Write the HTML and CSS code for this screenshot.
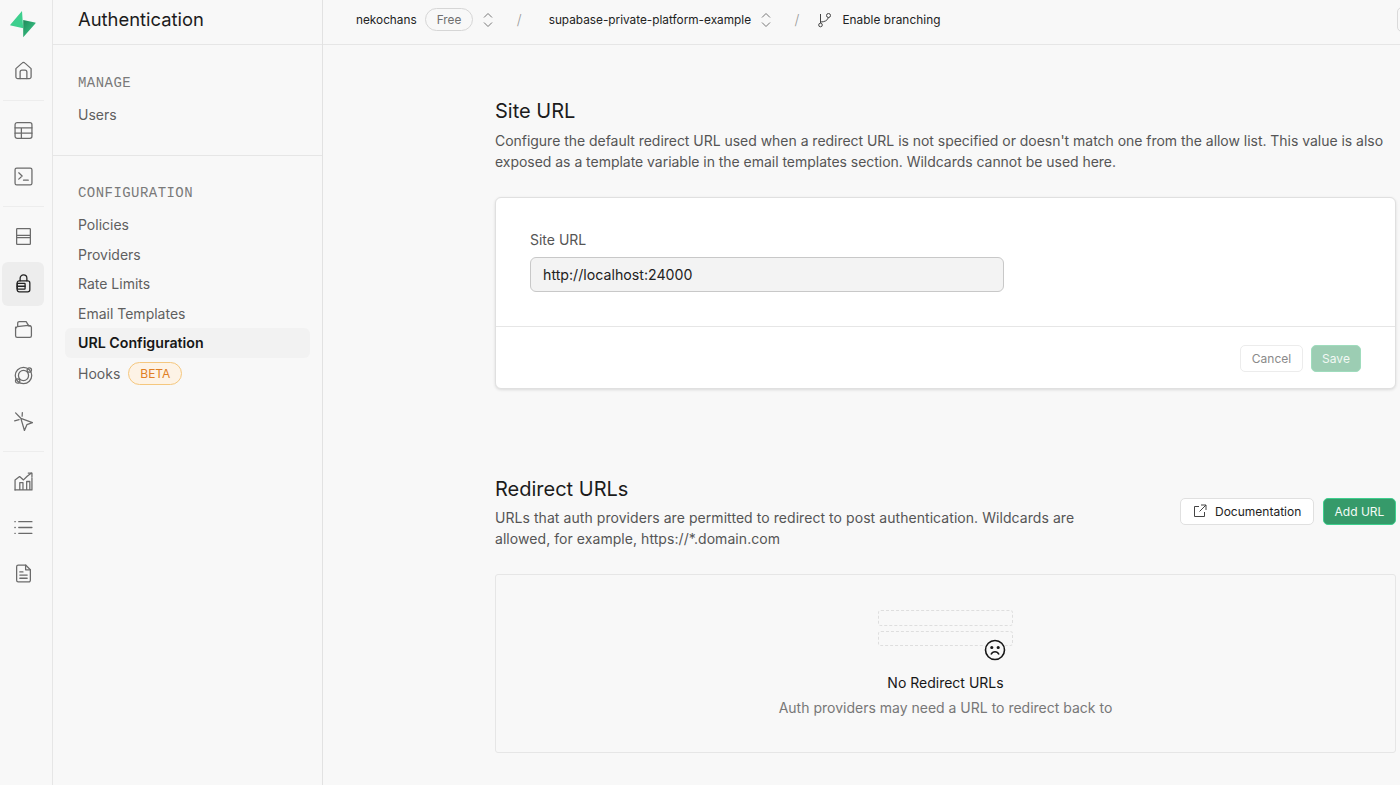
FILE: index.html
```html
<!DOCTYPE html>
<html lang="en">
<head>
<meta charset="utf-8">
<title>Authentication</title>
<link rel="stylesheet" href="styles.css">
</head>
<body>
<div class="app">
  <nav class="rail">
    <svg class="logo" width="28" height="28" viewBox="0 0 28 28">
      <defs><linearGradient id="lg" x1="0" y1="0" x2="1" y2="1"><stop offset="0" stop-color="#1f8a5a"/><stop offset="1" stop-color="#3ecf8e"/></linearGradient></defs>
      <path d="M13 1 1.500 14.500c-.4.5-.2 1 .4 1.100l12.300 2.700z" fill="#3ecf8e"/>
      <path d="M14.200 10v17.300L26.400 13.400c.4-.5.200-.8-.4-.9z" fill="url(#lg)"/>
    </svg>
    <div class="rail-btn"><svg class="ic" viewBox="0 0 18 18"><path d="M1.800 7.200 7.600 2a2 2 0 0 1 2.800 0l5.800 5.200V15a1.800 1.800 0 0 1-1.800 1.800H3.600A1.800 1.800 0 0 1 1.800 15z"/><path d="M5.800 16.600V10.500A1.800 1.800 0 0 1 7.600 8.700h2.800a1.800 1.800 0 0 1 1.800 1.800v6.100"/></svg></div>
    <hr class="rail-sep">
    <div class="rail-btn"><svg class="ic" viewBox="0 0 18 18"><rect x="1" y="1.500" width="16" height="15" rx="2"/><path d="M1 6.500h16M1 11.500h16M7 6.500v10"/></svg></div>
    <div class="rail-btn"><svg class="ic" viewBox="0 0 18 18"><rect x="1" y="1" width="16" height="16" rx="1.600"/><path d="m4.500 5.500 3.200 3-3.200 3M9 12.500h4.500"/></svg></div>
    <hr class="rail-sep">
    <div class="rail-btn rail-db"><svg class="ic" viewBox="0 0 18 18"><rect x="2.500" y="1.500" width="13" height="6.500" rx=".6"/><rect x="2.500" y="10" width="13" height="6.500" rx=".6"/><path d="M2.500 8v2M15.500 8v2"/></svg></div>
    <div class="rail-btn rail-active"><svg class="ic ic-dark" viewBox="0 0 18 18"><path d="M5.800 6.500V4a3.200 3.200 0 0 1 6.400 0v2.500"/><rect x="3" y="6.500" width="12" height="10.500" rx="2"/><rect x="3" y="8.800" width="7.500" height="5.600" rx=".4"/><path d="M3 11.600h7.500"/></svg></div>
    <div class="rail-btn"><svg class="ic" viewBox="0 0 18 18"><path d="M1.500 6.800V15A1.500 1.500 0 0 0 3 16.500h12a1.500 1.500 0 0 0 1.500-1.500V7a1.500 1.500 0 0 0-1.500-1.500h-1L11.500 1.500H5A1.500 1.500 0 0 0 3.500 3v3"/><path d="M1.500 8 3 6.300 13.500 5l2 .6"/></svg></div>
    <div class="rail-btn"><svg class="ic" viewBox="0 0 18 18"><circle cx="9" cy="9" r="7.800"/><circle cx="9" cy="9" r="4.800"/><circle cx="14.500" cy="3.800" r="2.100"/><circle cx="3.500" cy="14.200" r="2.100"/></svg></div>
    <div class="rail-btn"><svg class="ic" viewBox="0 0 18 18"><path d="m6.500 6 11 4-5.300 2-2.300 5.500z"/><path d="M6 5.500 1.500.8M4.800 7.300.6 8.300M7.700 4 7.900.6"/></svg></div>
    <hr class="rail-sep">
    <div class="rail-btn"><svg class="ic" viewBox="0 0 18 18"><path d="M1 17V7.500l4.300-3.200 3.700 3.200 3.500-3.500 4-3"/><path d="M13.500 1H17v3.500"/><path d="M1 17h16V5.500M5.500 17v-7H8.500v7M12 17v-8h3v8"/></svg></div>
    <div class="rail-btn"><svg class="ic" viewBox="0 0 18 18"><path d="M4.500 3.500H17M4.500 9H17M4.500 14.500H17"/><path d="M.8 3.500h.4M.8 9h.4M.8 14.500h.4"/></svg></div>
    <div class="rail-btn"><svg class="ic" viewBox="0 0 18 18"><path d="M2.500 2.500A1.500 1.500 0 0 1 4 1h7l4.500 4.500V15.500A1.500 1.500 0 0 1 14 17H4a1.500 1.500 0 0 1-1.500-1.500z"/><path d="M11 1v4.500h4.500M5.500 7.500h3M5.500 10.500h7M5.500 13.500h7"/></svg></div>
  </nav>

  <aside class="menu">
    <h1 class="menu-title">Authentication</h1>
    <section class="menu-group group-manage">
      <h2 class="menu-heading">MANAGE</h2>
      <a class="menu-item">Users</a>
    </section>
    <section class="menu-group group-config">
      <h2 class="menu-heading">CONFIGURATION</h2>
      <a class="menu-item">Policies</a>
      <a class="menu-item">Providers</a>
      <a class="menu-item">Rate Limits</a>
      <a class="menu-item">Email Templates</a>
      <a class="menu-item menu-current">URL Configuration</a>
      <a class="menu-item menu-hooks">Hooks <span class="beta">BETA</span></a>
    </section>
  </aside>

  <div class="main">
    <header class="topbar">
      <span class="crumb">nekochans</span>
      <span class="plan">Free</span>
      <svg class="updown" viewBox="0 0 12 18"><path d="m2 6.500 4-4 4 4M2 11.500l4 4 4-4"/></svg>
      <span class="slash">/</span>
      <span class="crumb">supabase-private-platform-example</span>
      <svg class="updown" viewBox="0 0 12 18"><path d="m2 6.500 4-4 4 4M2 11.500l4 4 4-4"/></svg>
      <span class="slash slash-b">/</span>
      <svg class="branch" viewBox="0 0 16 16"><circle cx="3.500" cy="13" r="1.800"/><circle cx="11.500" cy="3.500" r="2"/><path d="M3.500 11V2M3.500 10c4 0 7-1.500 8-4.500"/></svg>
      <span class="crumb crumb-wide">Enable branching</span>
      <span class="topbar-end"></span>
    </header>

    <main class="content">
      <section class="site">
        <h2 class="sec-title">Site URL</h2>
        <p class="sec-text">Configure the default redirect URL used when a redirect URL is not specified or doesn't match one from the allow list. This value is also exposed as a template variable in the email templates section. Wildcards cannot be used here.</p>
        <div class="card">
          <div class="card-body">
            <label class="field-label">Site URL</label>
            <div class="input">http://localhost:24000</div>
          </div>
          <div class="card-foot">
            <button class="btn btn-cancel">Cancel</button>
            <button class="btn btn-save">Save</button>
          </div>
        </div>
      </section>

      <section class="redirect">
        <div class="redirect-head">
          <div class="redirect-copy">
            <h2 class="sec-title">Redirect URLs</h2>
            <p class="sec-text sec-text-wide">URLs that auth providers are permitted to redirect to post authentication. Wildcards are allowed, for example, https://*.domain.com</p>
          </div>
          <div class="redirect-actions">
            <button class="btn btn-doc"><svg class="ext" viewBox="0 0 14 14"><path d="M6 2.500H1.500v10h10V8M8 1h5v5M13 1 6.500 7.500"/></svg>Documentation</button>
            <button class="btn btn-add">Add URL</button>
          </div>
        </div>
        <div class="empty">
          <div class="ghosts">
            <div class="ghost"></div>
            <div class="ghost"></div>
            <svg class="sad" viewBox="0 0 22 22"><circle cx="11" cy="11" r="9.500"/><path d="M7 15.500c1-2 2.400-2.800 4-2.800s3 .8 4 2.800"/><circle cx="7.800" cy="8.500" r=".8"/><circle cx="14.200" cy="8.500" r=".8"/></svg>
          </div>
          <p class="empty-title">No Redirect URLs</p>
          <p class="empty-text">Auth providers may need a URL to redirect back to</p>
        </div>
      </section>
    </main>
  </div>
</div>
</body>
</html>
```
FILE: styles.css
```css
* { box-sizing: border-box; }
html, body { margin: 0; height: 100%; overflow: hidden; }
body { font-family: "Inter", "Liberation Sans", sans-serif; background: #f8f8f8; color: #171717; }
.app { display: flex; height: 785px; width: 1400px; overflow: hidden; }

.rail { width: 53px; flex: none; border-right: 1px solid #e6e6e6; display: flex; flex-direction: column; align-items: center; padding-top: 10px; }
.logo { display: block; flex: none; margin-left: -6px; margin-bottom: 11px; }
.rail-btn { width: 42px; height: 44px; flex: none; display: flex; align-items: center; justify-content: center; margin-left: -6px; margin-bottom: 2px; }
.rail-db { margin-bottom: 3px; }
.rail-active { background: #ededed; border-radius: 6px; }
.rail-sep { width: 41px; flex: none; margin: 5px 0 8px -6px; border: 0; border-top: 1px solid #ededed; }
.ic { width: 19px; height: 19px; margin-top: -1px; fill: none; stroke: #6b6b6b; stroke-width: 1.2; stroke-linecap: round; stroke-linejoin: round; }
.ic-dark { stroke: #222; }

.menu { width: 270px; flex: none; border-right: 1px solid #e2e2e2; }
.menu-title { height: 45px; margin: 0; padding: 0 0 0 25px; font-size: 18.4px; font-weight: 400; line-height: 39px; border-bottom: 1px solid #e6e6e6; color: #1c1c1c; }
.menu-group { padding: 0 12px; }
.group-manage { padding-top: 28px; height: 111px; border-bottom: 1px solid #e6e6e6; }
.group-config { padding-top: 27px; }
.menu-heading { margin: 0 0 7px 13px; font: 400 14px/20px "Liberation Mono", monospace; letter-spacing: .45px; color: #7a7a7a; }
.menu-item { display: flex; align-items: center; height: 29.5px; padding-left: 13px; font-size: 14px; color: #5f5f5f; border-radius: 6px; }
.menu-current { color: #171717; font-weight: 600; font-size: 14.2px; background: #f2f2f2; }
.menu-hooks { margin-top: 1px; }
.beta { margin-left: 8px; height: 23px; padding: 0 11px; display: inline-flex; align-items: center; border: 1px solid #f5c77e; border-radius: 12px; background: #fdf3e6; color: #e07f24; font-size: 12px; }

.main { flex: 1; min-width: 0; }
.topbar { height: 45px; display: flex; align-items: center; padding: 0 0 5px 33px; border-bottom: 1px solid #e6e6e6; position: relative; }
.crumb { font-size: 11.8px; color: #222; white-space: nowrap; }
.crumb-wide { letter-spacing: .07px; }
.plan { margin-left: 8px; height: 23px; padding: 0 11px; border: 1px solid #d6d6d6; border-radius: 12px; display: inline-flex; align-items: center; font-size: 11.8px; color: #6f6f6f; }
.updown { width: 12px; height: 18px; margin-left: 8.5px; fill: none; stroke: #777; stroke-width: 1; }
.slash { margin: 0 27px 0 23px; font-size: 14px; font-weight: 300; color: #9a9a9a; }
.slash-b { margin-right: 18px; }
.branch { width: 16px; height: 16px; margin-right: 9px; fill: none; stroke: #444; stroke-width: 1; }
.topbar-end { position: absolute; right: -7px; top: 7px; width: 10px; height: 25px; border: 1px solid #dadada; border-radius: 5px; }

.content { padding: 0 4px 0 172px; }
.site { padding-top: 52px; }
.sec-title { margin: 0; font-size: 20px; font-weight: 400; line-height: 28px; color: #1c1c1c; }
.sec-text { margin: 5px 0 0; font-size: 14px; line-height: 21px; letter-spacing: -.03px; color: #555; }
.sec-text-wide { margin-top: 4px; letter-spacing: .06px; }
.card { margin-top: 25px; height: 192px; background: #fff; border: 1px solid #e0e0e0; border-radius: 6px; box-shadow: 0 1px 3px rgba(0,0,0,.12); display: flex; flex-direction: column; }
.card-body { height: 129px; padding: 32px 34px 0; border-bottom: 1px solid #e6e6e6; }
.field-label { display: block; font-size: 14px; line-height: 20px; color: #555; }
.input { margin-top: 7px; width: 474px; height: 35px; padding: 0 12px; display: flex; align-items: center; background: #f3f3f3; border: 1px solid #c8c8c8; border-radius: 6px; font-size: 14.2px; color: #222; }
.card-foot { flex: 1; display: flex; align-items: center; justify-content: flex-end; gap: 8px; padding: 1px 34px 0 0; }
.btn { height: 27px; padding: 0 10px; border-radius: 5px; font: 400 12px "Inter", "Liberation Sans", sans-serif; display: inline-flex; align-items: center; white-space: nowrap; }
.btn-cancel { width: 63px; justify-content: center; background: #fff; color: #8a8a8a; border: 1px solid #ececec; }
.btn-save { width: 50px; justify-content: center; background: #9ccdb3; color: #f2f8f4; border: 1px solid #9fdcbd; }

.redirect { margin-top: 86px; }
.redirect-head { display: flex; justify-content: space-between; align-items: center; }
.redirect-copy { width: 600px; }
.redirect-actions { display: flex; gap: 9px; margin-top: -2px; }
.btn-doc { width: 134px; gap: 8px; padding-left: 12px; background: #fff; color: #222; border: 1px solid #e0e0e0; }
.btn-add { width: 73px; justify-content: center; background: #369a6a; color: #f4faf6; border: 1px solid #3ecf8e; }
.ext { width: 14px; height: 14px; fill: none; stroke: #444; stroke-width: 1; }

.empty { margin-top: 25px; height: 179px; border: 1px solid #e6e6e6; border-radius: 3px; display: flex; flex-direction: column; align-items: center; padding-top: 35px; }
.ghosts { width: 135px; display: flex; flex-direction: column; gap: 5px; position: relative; height: 36px; }
.ghost { height: 16px; border: 1px dashed #dedede; border-radius: 3px; }
.sad { position: absolute; right: 7px; top: 29px; width: 22px; height: 22px; fill: none; stroke: #171717; stroke-width: 1.6; background: #f8f8f8; border-radius: 50%; }
.empty-title { margin: 27px 0 0; font-size: 14px; line-height: 20px; color: #171717; }
.empty-text { margin: 5px 0 0; font-size: 14px; line-height: 20px; color: #777; }
```
